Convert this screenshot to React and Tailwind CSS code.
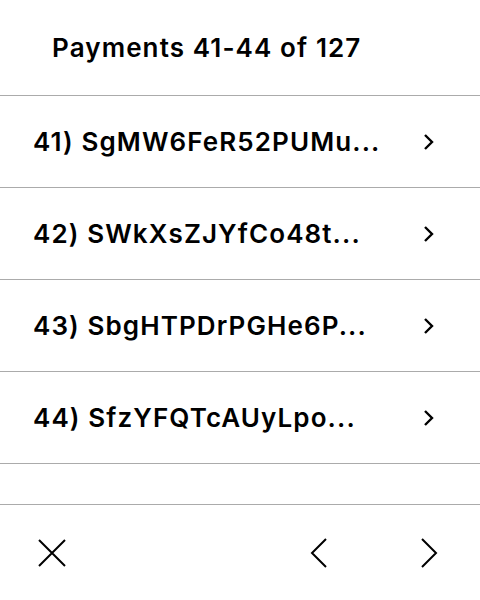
import React from 'react';

const rows = [
  '41) SgMW6FeR52PUMu...',
  '42) SWkXsZJYfCo48t...',
  '43) SbgHTPDrPGHe6P...',
  '44) SfzYFQTcAUyLpo...',
];

function Chevron({ className = '' }) {
  return (
    <svg viewBox="0 0 11 18" className={className} fill="none" stroke="black" strokeWidth="2.4">
      <path d="M2 2 L9 9 L2 16" />
    </svg>
  );
}

export default function App() {
  return (
    <div className="w-[480px] h-[600px] bg-white flex flex-col text-black" style={{ fontFamily: 'Inter, "Liberation Sans", sans-serif' }}>
      <div className="h-[96px] shrink-0 flex items-center pl-[52px] border-b border-[#ababab]">
        <span className="text-[26px] font-semibold tracking-[1.1px]">Payments 41-44 of 127</span>
      </div>
      {rows.map((r) => (
        <div key={r} className="h-[92px] shrink-0 flex items-center justify-between pl-[33px] pr-[46px] border-b border-[#ababab]">
          <span className="text-[26px] font-semibold tracking-[1.1px]">{r}</span>
          <Chevron className="w-[11px] h-[18px]" />
        </div>
      ))}
      <div className="h-[41px] shrink-0 border-b border-[#ababab]" />
      <div className="flex-1 flex items-center px-[38px]">
        <svg viewBox="0 0 28 28" className="w-[28px] h-[28px]" fill="none" stroke="black" strokeWidth="2">
          <path d="M1 1 L27 27 M27 1 L1 27" />
        </svg>
        <div className="flex-1" />
        <svg viewBox="0 0 18 30" className="w-[18px] h-[30px] mr-[92px]" fill="none" stroke="black" strokeWidth="2">
          <path d="M16 1 L2 15 L16 29" />
        </svg>
        <svg viewBox="0 0 18 30" className="w-[18px] h-[30px] mr-[4px]" fill="none" stroke="black" strokeWidth="2">
          <path d="M2 1 L16 15 L2 29" />
        </svg>
      </div>
    </div>
  );
}
